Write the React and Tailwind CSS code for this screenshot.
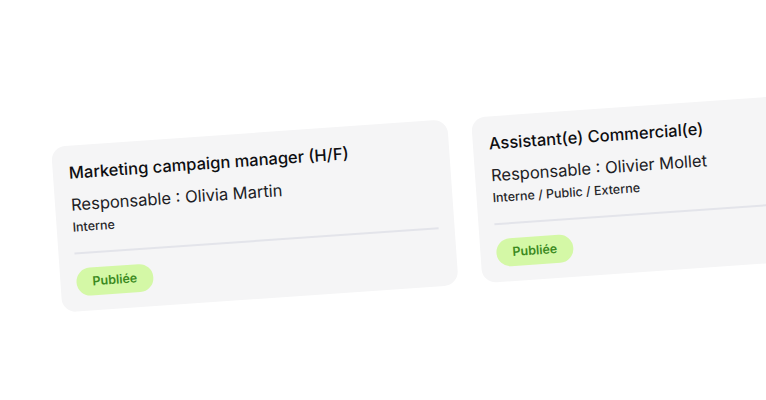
export default function App() {
  const cards = [
    {
      title: "Marketing campaign manager (H/F)",
      owner: "Olivia Martin",
      audience: "Interne",
    },
    {
      title: "Assistant(e) Commercial(e)",
      owner: "Olivier Mollet",
      audience: "Interne / Public / Externe",
    },
  ];

  return (
    <div
      className="w-[766px] h-[400px] overflow-hidden bg-white"
      style={{ fontFamily: "Inter, 'Noto Sans', sans-serif" }}
    >
      <div className="flex gap-6 pl-[51px] pt-[147px] origin-[51px_147px] rotate-[-4deg]">
        {cards.map((card) => (
          <div
            key={card.title}
            className="w-[397px] shrink-0 rounded-[14px] bg-[#f5f5f6] px-4 pt-[15px] pb-[15px]"
          >
            <h3 className="text-[16.5px] leading-6 font-medium text-[#0e0e11]">
              {card.title}
            </h3>
            <p className="mt-[8px] text-[16.5px] leading-6 text-[#202024]">
              Responsable : {card.owner}
            </p>
            <p className="mt-[3px] text-[12.5px] leading-4 font-medium text-[#27272a]">
              {card.audience}
            </p>
            <div className="mt-[17px] h-[2px] bg-[#e3e4ea]" />
            <div className="mt-[14px]">
              <span className="inline-flex h-7 items-center rounded-full bg-[#d4f8a6] px-4 text-[12.5px] font-semibold text-[#3b8a1e]">
                Publiée
              </span>
            </div>
          </div>
        ))}
      </div>
    </div>
  );
}
